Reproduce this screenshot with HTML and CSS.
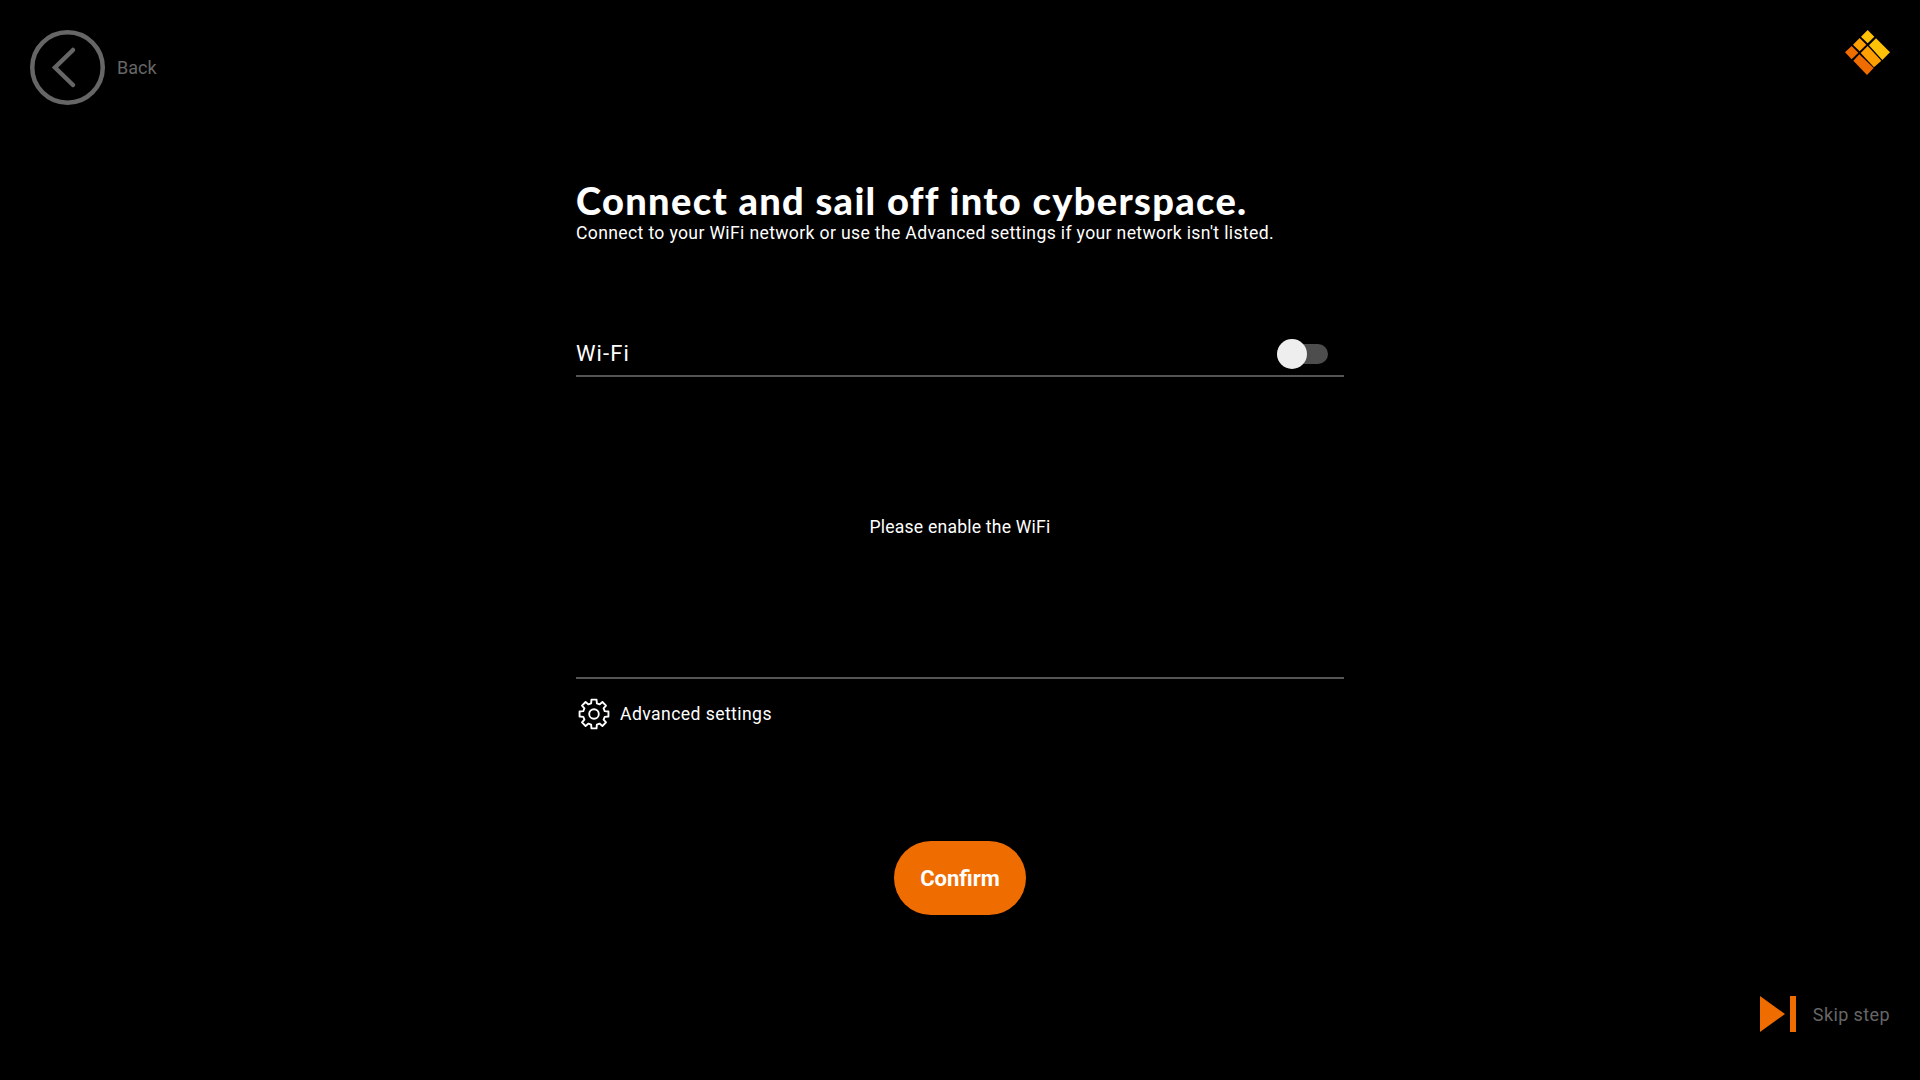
FILE: index.html
```html
<!DOCTYPE html>
<html lang="en">
<head>
    <meta charset="UTF-8">
    <title>Connect</title>
    <link rel="stylesheet" href="styles.css">
</head>
<body>
    <div class="page">
        <header class="top">
            <a class="back">
                <svg class="back-icon" viewBox="0 0 75 75">
                    <circle cx="37.5" cy="37.5" r="35.25" fill="none" stroke="#666" stroke-width="4.5"/>
                    <path d="M43 20 L25 37.5 L43 55" fill="none" stroke="#666" stroke-width="4.5" stroke-linecap="round" stroke-linejoin="miter"/>
                </svg>
                <span>Back</span>
            </a>
            <svg class="logo" viewBox="75 60 135 135">
                <polygon points="143,60 163,80 143,100 123,80" fill="#ffc107"/>
                <polygon points="168,85 210,127 187,150 147,106" fill="#ffc107"/>
                <polygon points="119,84 139,104 119,124 99,104" fill="#ffa000"/>
                <polygon points="143,108 184,152 162,172 122,129" fill="#ffa000"/>
                <polygon points="95,108 115,128 95,148 75,127" fill="#ef6c00"/>
                <polygon points="118,133 161,174 141,195 100,152" fill="#ef6c00"/>
            </svg>
        </header>

        <main class="content">
            <h1>Connect and sail off into cyberspace.</h1>
            <p class="intro">Connect to your WiFi network or use the Advanced settings if your network isn't listed.</p>

            <div class="wifi-row">
                <span>Wi-Fi</span>
                <div class="toggle"><div class="knob"></div></div>
            </div>

            <div class="networks">Please enable the WiFi</div>

            <a class="advanced">
                <svg class="gear" viewBox="0 0 24 24">
                    <path d="M10.09 1.17H13.91L14.15 3.98L16.15 4.81L18.31 2.99L21.01 5.69L19.19 7.85L20.02 9.85L22.83 10.09V13.91L20.02 14.15L19.19 16.15L21.01 18.31L18.31 21.01L16.15 19.19L14.15 20.02L13.91 22.83H10.09L9.85 20.02L7.85 19.19L5.69 21.01L2.99 18.31L4.81 16.15L3.98 14.15L1.17 13.91V10.09L3.98 9.85L4.81 7.85L2.99 5.69L5.69 2.99L7.85 4.81L9.85 3.98Z" fill="none" stroke="#fff" stroke-width="1.4" stroke-linejoin="round"/>
                    <circle cx="12" cy="12" r="3.6" fill="none" stroke="#fff" stroke-width="1.4"/>
                </svg>
                <span>Advanced settings</span>
            </a>

            <button class="confirm" type="button">Confirm</button>
        </main>

        <footer class="bottom">
            <a class="skip">
                <svg class="skip-icon" viewBox="0 0 36 36">
                    <polygon points="0,0 25,18 0,36" fill="#ef6c00"/>
                    <rect x="30" y="0" width="6" height="36" fill="#ef6c00"/>
                </svg>
                <span>Skip step</span>
            </a>
        </footer>
    </div>
</body>
</html>
```

FILE: styles.css
```css
html, body {
    margin: 0;
    padding: 0;
    background-color: black;
    color: white;
    font-family: "Roboto", "Liberation Sans", sans-serif;
}

.page {
    display: flex;
    flex-direction: column;
    height: 1080px;
    overflow: hidden;
}

.top {
    display: flex;
    justify-content: space-between;
    align-items: flex-start;
    padding: 30px 30px 0 30px;
    height: 75px;
}

.back {
    display: flex;
    align-items: center;
    gap: 12px;
    color: #666;
    font-size: 18px;
}

.back-icon {
    width: 75px;
    height: 75px;
}

.logo {
    width: 45px;
    height: 45px;
}

.content {
    display: flex;
    flex-direction: column;
    width: 768px;
    margin: 0 auto;
    flex: 1;
}

h1 {
    margin: 73px 0 0 0;
    font-family: "Lato", sans-serif;
    font-size: 38px;
    line-height: 44px;
    font-weight: 900;
    letter-spacing: 1.33px;
}

.intro {
    margin: 0;
    font-size: 17.6px;
    line-height: 23px;
    letter-spacing: 0.35px;
}

.wifi-row {
    display: flex;
    justify-content: space-between;
    align-items: center;
    margin-top: 87px;
    height: 43px;
    padding-right: 16px;
    border-bottom: 2px solid #555;
    font-size: 22px;
    letter-spacing: 1.1px;
}

.toggle {
    position: relative;
    width: 51px;
    height: 20px;
    border-radius: 10px;
    background-color: #4d4d4d;
}

.knob {
    position: absolute;
    left: 0;
    top: -5px;
    width: 30px;
    height: 30px;
    border-radius: 50%;
    background-color: #eee;
}

.networks {
    display: flex;
    justify-content: center;
    align-items: center;
    height: 300px;
    border-bottom: 2px solid #555;
    font-size: 17.6px;
    letter-spacing: 0.2px;
}

.advanced {
    display: flex;
    align-items: center;
    gap: 10px;
    margin-top: 19px;
    padding-left: 2px;
    font-size: 17.6px;
    letter-spacing: 0.42px;
}

.gear {
    width: 32px;
    height: 32px;
}

.confirm {
    align-self: center;
    width: 132px;
    height: 74px;
    margin-top: 111px;
    border: none;
    border-radius: 37px;
    background-color: #ef6c00;
    color: white;
    font-family: "Roboto", sans-serif;
    font-size: 22px;
    font-weight: 700;
}

.bottom {
    display: flex;
    justify-content: flex-end;
    padding: 0 30px 48px 0;
}

.skip {
    display: flex;
    align-items: center;
    gap: 17px;
    color: #666;
    font-size: 18px;
    letter-spacing: 0.4px;
}

.skip-icon {
    width: 36px;
    height: 36px;
}
```
